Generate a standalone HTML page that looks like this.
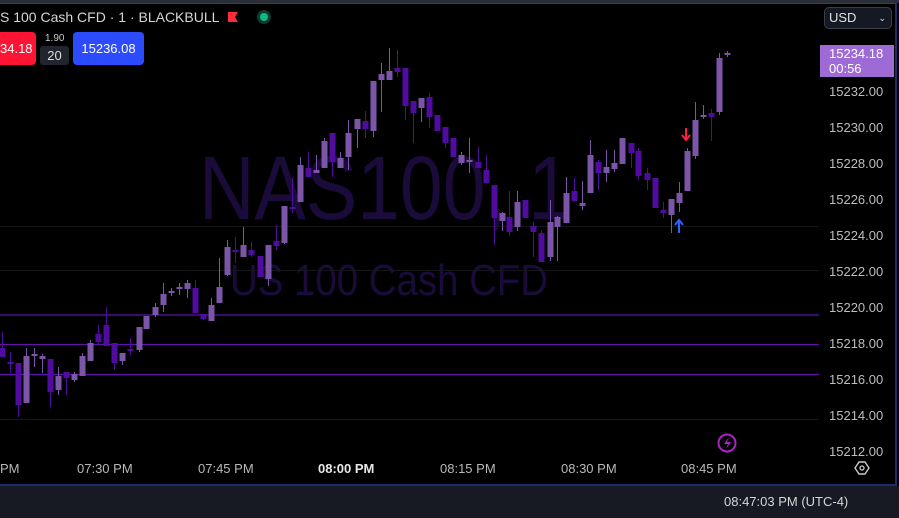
<!DOCTYPE html>
<html><head><meta charset="utf-8"><style>
html,body{margin:0;padding:0;background:#000;width:899px;height:518px;overflow:hidden;font-family:"Liberation Sans",sans-serif}
#frame{position:absolute;left:0;top:3px;width:895px;height:480px;background:#000;border-right:2px solid #1c2a6e;border-bottom:2px solid #1c2a6e;border-top:1px solid #3a3e48}
.t{position:absolute;white-space:nowrap}
#bar{position:absolute;left:0;top:486px;width:899px;height:32px;background:#171a22}
</style></head><body>
<div style="position:absolute;left:0;top:0;width:899px;height:3px;background:#2a2e39"></div>
<div id="frame"></div>
<svg id="s" width="899" height="518" style="position:absolute;left:0;top:0">
<g fill="#1b0b3a" font-family="Liberation Sans, sans-serif">
<text x="199" y="219" font-size="90" textLength="372" lengthAdjust="spacingAndGlyphs">NAS100, 1</text>
<text x="230" y="295" font-size="44" textLength="318" lengthAdjust="spacingAndGlyphs">US 100 Cash CFD</text>
</g>
<g stroke="#16161a" stroke-width="1">
<line x1="0" y1="226.5" x2="819" y2="226.5"/><line x1="0" y1="270.5" x2="819" y2="270.5"/><line x1="0" y1="419.5" x2="819" y2="419.5"/>
</g>
<g stroke="#5e14a8" stroke-width="1.3">
<line x1="0" y1="315" x2="819" y2="315"/><line x1="0" y1="344.5" x2="819" y2="344.5"/><line x1="0" y1="374.5" x2="819" y2="374.5"/>
</g>
<g id="c"></g>
<!-- arrows -->
<path d="M686 128v11M682 135l4 5 4-5" stroke="#ff1e3c" stroke-width="2" fill="none"/>
<path d="M679 233v-12M675 225l4-5 4 5" stroke="#2f62ff" stroke-width="2" fill="none"/>
<!-- lightning -->
<circle cx="727" cy="443" r="8.5" fill="none" stroke="#b020c8" stroke-width="2"/>
<path d="M729 437l-5 7h4l-2 5 5-7h-4z" fill="#b020c8"/>
<!-- settings hex -->
<path d="M855 468l4-6h6l4 6-4 6h-6z" fill="none" stroke="#c8c8c8" stroke-width="1.4"/>
<circle cx="862" cy="468" r="2" fill="none" stroke="#c8c8c8" stroke-width="1.3"/>
<!-- fullscreen -->
<path d="M876 503v6h6M886 495h6v6" fill="none" stroke="#d0d0d0" stroke-width="1.4"/>
<line x1="863.5" y1="492" x2="863.5" y2="512" stroke="#3a3e48"/>
</svg>
<div class="t" style="left:0;top:9px;color:#d6d6d6;font-size:14px">S 100 Cash CFD · 1 · BLACKBULL</div>
<div style="position:absolute;left:228px;top:12px;width:10px;height:10px;background:#ff2a3c;clip-path:polygon(0 0,100% 0,70% 50%,100% 100%,0 100%)"></div>
<div style="position:absolute;left:257px;top:10px;width:14px;height:14px;border-radius:50%;background:#0f3a30"></div>
<div style="position:absolute;left:260px;top:13px;width:8px;height:8px;border-radius:50%;background:#10b981"></div>
<div style="position:absolute;left:0;top:32px;width:36px;height:33px;background:#ff1433;border-radius:0 4px 4px 0"></div>
<div class="t" style="left:0;top:41px;color:#fff;font-size:13px">34.18</div>
<div class="t" style="left:45px;top:33px;color:#c8c8c8;font-size:10px">1.90</div>
<div style="position:absolute;left:40px;top:46px;width:29px;height:19px;background:#22252e;border-radius:3px;color:#ddd;font-size:13px;text-align:center;line-height:19px">20</div>
<div style="position:absolute;left:73px;top:32px;width:71px;height:33px;background:#2c4bff;border-radius:4px;color:#fff;font-size:13px;text-align:center;line-height:33px">15236.08</div>
<div style="position:absolute;left:824px;top:7px;width:68px;height:22px;background:#151923;border:1px solid #3a3e4a;border-radius:5px;box-sizing:border-box;color:#e0e0e0;font-size:13px;line-height:20px;padding-left:4px">USD<span style="position:absolute;right:5px;font-size:9px">⌄</span></div>
<div style="position:absolute;left:820px;top:45px;width:74px;height:32px;background:#9e6ad6"></div>
<div class="t" style="left:829px;top:46px;color:#fff;font-size:13px;line-height:15px">15234.18<br>00:56</div>
<div id="ax"></div>
<div class="t" style="left:0;top:461px;color:#b8b8b8;font-size:13px">PM</div>
<div class="t" style="left:77px;top:461px;color:#b8b8b8;font-size:13px">07:30 PM</div>
<div class="t" style="left:198px;top:461px;color:#b8b8b8;font-size:13px">07:45 PM</div>
<div class="t" style="left:318px;top:461px;color:#e8e8e8;font-size:13px;font-weight:bold">08:00 PM</div>
<div class="t" style="left:440px;top:461px;color:#b8b8b8;font-size:13px">08:15 PM</div>
<div class="t" style="left:561px;top:461px;color:#b8b8b8;font-size:13px">08:30 PM</div>
<div class="t" style="left:681px;top:461px;color:#b8b8b8;font-size:13px">08:45 PM</div>
<div id="bar"></div>
<div class="t" style="left:724px;top:494px;color:#d6d6d6;font-size:13px">08:47:03 PM (UTC-4)</div>
<script>
var ax=document.getElementById('ax'),h='';
[15232,15230,15228,15226,15224,15222,15220,15218,15216,15214,15212].forEach(function(p){var y=92+(15232-p)*18;h+='<div class="t" style="left:829px;top:'+(y-8)+'px;color:#bdbdbd;font-size:13px">'+p+'.00</div>'});
ax.innerHTML=h;
// x, bodyTop, bodyBot, wickTop, wickBot, light(1)/dark(0)
var C=[[2,348,357,332,357,0],[10,362,364,352,373,0],[18,363,405,363,417,0],[26,356,403,348,403,1],[34,354,356,348,367,1],[42,356,359,354,373,1],[50,359,392,359,407,0],[58,376,390,367,395,1],[66,372,378,372,395,0],[74,374,380,372,382,1],[82,356,376,353,376,1],[90,343,361,340,361,1],[98,334,342,325,345,0],[106,325,346,307,346,0],[114,343,363,343,370,0],[122,353,361,353,365,1],[130,349,351,338,355,0],[139,327,350,327,352,1],[146,316,329,316,329,1],[155,307,315,303,317,1],[163,294,305,283,312,1],[171,291,293,288,296,1],[179,287,289,283,295,1],[187,283,289,280,298,1],[195,288,313,280,313,0],[203,314,319,314,320,0],[211,305,321,298,321,1],[219,287,303,258,303,1],[227,247,275,240,276,1],[235,250,252,237,263,0],[243,245,257,227,257,1],[251,250,255,242,257,0],[260,256,277,256,277,0],[268,245,279,245,286,1],[276,241,246,225,250,0],[284,206,243,206,244,1],[292,207,209,178,213,0],[300,165,202,157,202,1],[308,168,177,152,177,0],[316,170,173,155,172,1],[324,141,168,138,168,1],[332,133,162,133,177,0],[340,158,168,152,168,1],[348,133,157,120,170,1],[357,119,129,119,148,1],[365,121,129,111,138,0],[373,81,131,81,137,1],[381,74,80,63,112,1],[389,71,80,48,80,1],[397,68,72,50,77,0],[405,68,106,68,120,0],[413,101,113,101,143,0],[421,98,108,98,122,1],[429,97,117,93,128,0],[437,115,131,115,131,0],[445,127,143,127,148,0],[453,138,157,138,157,0],[461,155,163,152,165,1],[469,160,162,138,173,1],[478,162,168,147,168,0],[486,170,183,155,183,0],[494,185,218,185,245,0],[502,213,221,212,231,1],[509,217,232,191,236,0],[517,202,227,191,231,1],[525,200,218,200,218,0],[533,226,232,222,257,0],[541,233,262,230,262,0],[550,222,257,200,261,1],[557,217,227,216,261,1],[566,193,223,177,223,1],[574,191,201,178,202,0],[582,203,206,181,210,1],[590,155,193,140,193,1],[598,162,173,160,190,0],[606,167,173,150,182,1],[614,163,169,150,172,1],[622,138,164,138,164,1],[631,143,153,143,168,0],[638,151,176,148,180,0],[647,173,180,168,190,0],[655,178,208,178,208,0],[663,210,213,202,218,0],[671,199,215,199,233,1],[679,193,203,182,212,1],[687,151,191,148,191,1],[695,120,156,102,159,1],[703,115,117,105,119,1],[711,113,117,109,141,0],[719,58,112,53,115,1],[727,53,55,51,57,1]];
var g='';C.forEach(function(c){var col=c[5]?'#7b56a8':'#4f0c9e';g+='<line x1="'+(c[0]+.5)+'" y1="'+c[3]+'" x2="'+(c[0]+.5)+'" y2="'+c[4]+'" stroke="'+col+'"/>';var bh=Math.max(c[2]-c[1],1.5);g+='<rect x="'+(c[0]-2.5)+'" y="'+c[1]+'" width="6" height="'+bh+'" fill="'+col+'"/>'});
document.getElementById('c').innerHTML=g;
</script>
</body></html>
